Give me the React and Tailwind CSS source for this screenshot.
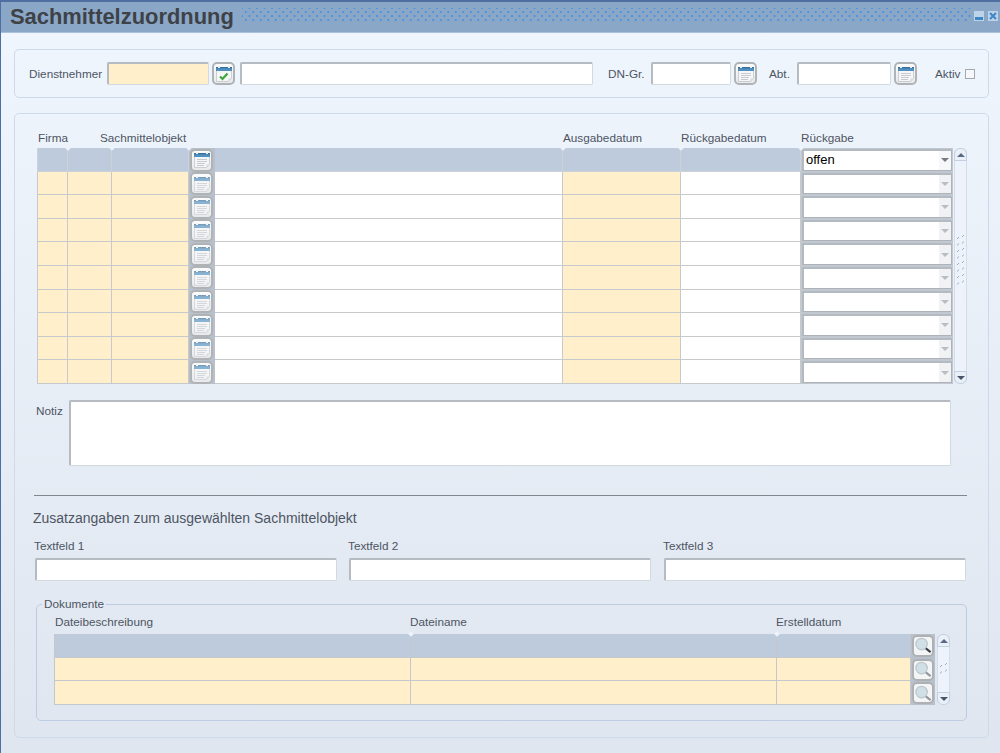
const FONT = "font-['Liberation_Sans',Arial,sans-serif]";

function DocIcon({ check, faded }) {
  return (
    <svg width="18" height="18" viewBox="0 0 18 18" className={faded ? "opacity-60" : "opacity-90"}>
      <path d="M1.5 2.5h15v11l-3 3h-12z" fill="#f6f7f8" stroke="#bcc1c6" strokeWidth="0.8" />
      <rect x="1" y="2" width="16" height="4" fill="#3f86bc" />
      <rect x="1" y="2" width="16" height="1.3" fill="#23618f" />
      <rect x="3" y="1" width="2" height="2" fill="#eef2f6" />
      <rect x="13" y="1" width="2" height="2" fill="#eef2f6" />
      <path d="M13.5 16.5v-3h3z" fill="#d4d7da" />
      {check ? (
        <path d="M5 11.5l2.5 2.5 5-5.5" fill="none" stroke="#2aa02a" strokeWidth="2.2" />
      ) : (
        <path d="M4 8.5h10M4 10.5h10M4 12.5h8M4 14.5h7" stroke="#bcc1c6" strokeWidth="0.9" />
      )}
    </svg>
  );
}

function IconButton({ check, faded }) {
  return (
    <div className="w-[23px] h-[23px] shrink-0 rounded-[5px] border-2 border-[#b0b3b6] bg-gradient-to-b from-[#fcfcfc] to-[#e8e9eb] flex items-center justify-center">
      <DocIcon check={check} faded={faded} />
    </div>
  );
}

function SearchButton({ dark }) {
  return (
    <div className="w-[22px] h-[22px] rounded-[5px] border-2 border-[#aeb1b4] bg-[#f4f5f6] flex items-center justify-center">
      <svg width="19" height="19" viewBox="0 0 19 19">
        <circle cx="8" cy="8" r="6" fill="#cfe0e6" stroke="#bcc6cb" strokeWidth="1.3" />
        <path d="M12.5 12.5l5 4" stroke={dark ? "#3a4046" : "#94989c"} strokeWidth="2.2" />
      </svg>
    </div>
  );
}

function Input({ className = "" }) {
  return (
    <div className={`h-[23px] rounded-[2px] border-t-2 border-l-2 border-r border-b border-t-[#b6bbc2] border-l-[#b6bbc2] border-r-[#d3d9e1] border-b-[#d3d9e1] ${className}`} />
  );
}

function Arrow({ up, color }) {
  return (
    <svg width="8" height="4" viewBox="0 0 8 4">
      <path d={up ? "M4 0L8 4H0z" : "M0 0h8L4 4z"} fill={color} />
    </svg>
  );
}

function Grip({ n }) {
  return (
    <svg width="9" height={n * 6.5} viewBox={`0 0 9 ${n * 6.5}`}>
      {Array.from({ length: n }).map((_, i) => (
        <g key={i} fill="#9fabbb">
          <rect x="1" y={i * 6.5 + 3} width="1" height="1" />
          <rect x="2" y={i * 6.5 + 2} width="1" height="1" />
          <rect x="6" y={i * 6.5 + 1} width="1" height="1" />
          <rect x="7" y={i * 6.5} width="1" height="1" />
        </g>
      ))}
    </svg>
  );
}

function Scrollbar({ className = "", n, gripClass = "" }) {
  return (
    <div className={`w-[13px] rounded-[5px] bg-[#eef3fb] border-x border-[#d3deec] flex flex-col items-center justify-between ${className}`}>
      <div className="w-[13px] h-[13px] shrink-0 rounded-t-[6px] border border-[#c2d0e2] bg-[#eaf0f8] flex items-center justify-center">
        <Arrow up color="#5a6a84" />
      </div>
      <div className={gripClass}><Grip n={n} /></div>
      <div className="w-[13px] h-[13px] shrink-0 rounded-b-[6px] border border-[#c2d0e2] bg-[#eaf0f8] flex items-center justify-center">
        <Arrow color="#4a5468" />
      </div>
    </div>
  );
}

function SelectBox({ value, active }) {
  return (
    <div className="h-full bg-[#c2c8cf] py-[1px] px-[1px] flex-1">
      <div className="h-full rounded-[1px] border-t-2 border-l-2 border-[#b4bac2] bg-white flex items-center border-b border-r border-b-[#aeb3ba] border-r-[#aeb3ba]">
        <span className="flex-1 pl-[2px] pb-[1px] text-[13px] leading-none text-black">{value}</span>
        <div className={`w-[12px] h-full flex items-center justify-center ${active ? "bg-[#f6f7f9]" : "bg-[#f0f2f4]"}`}>
          <Arrow color={active ? "#767b82" : "#b9bdc2"} />
        </div>
      </div>
    </div>
  );
}

function Notch({ className }) {
  return <div className={`absolute top-[-2px] w-[4px] h-[4px] rotate-45 bg-[#eef3fa] ${className}`} />;
}

const cols = "grid-cols-[31px_44px_77px_26px_348px_118px_120px_152px]";

function Row({ active }) {
  const yellow = active ? "bg-[#bdcbdc]" : "bg-[#fff0cb]";
  const plain = active ? "bg-[#bdcbdc]" : "bg-white";
  const line = active ? "border-[#cbd2da]" : "border-[#c6cacd]";
  const cell = `border-r border-b ${line} h-full`;
  return (
    <div className={`grid ${cols} h-[23.6px]`}>
      <div className={`${cell} border-l ${yellow}`} />
      <div className={`${cell} ${yellow}`} />
      <div className={`${cell} ${yellow}`} />
      <div className="bg-[#b8c1cb] h-full flex items-start pl-[1px] pt-[0.5px]">
        <IconButton faded={!active} />
      </div>
      <div className={`${cell} ${plain}`} />
      <div className={`${cell} ${yellow}`} />
      <div className={`${cell} ${plain}`} />
      <div className="h-full flex">
        <SelectBox value={active ? "offen" : ""} active={active} />
      </div>
    </div>
  );
}

function DocRow({ active }) {
  const bg = active ? "bg-[#bdcbdc]" : "bg-[#fff0cb]";
  const cell = `border-r border-b border-[#c4c8cc] h-full ${bg}`;
  return (
    <div className="grid grid-cols-[357px_366px_134px_24px] h-[23.7px]">
      <div className={`${cell} border-l`} />
      <div className={cell} />
      <div className={cell} />
      <div className="bg-[#b8c1cb] h-full flex items-center pl-[1px]">
        <SearchButton dark={active} />
      </div>
    </div>
  );
}

export default function App() {
  return (
    <div className={`w-[1000px] h-[753px] flex flex-col overflow-hidden border-l border-l-[#4e6fa5] bg-gradient-to-b from-[#f0f6fe] to-[#dfe6ef] text-[11.75px] text-[#4d5563] ${FONT}`}>
      {/* Title bar */}
      <div className="h-[33px] shrink-0 border-t-2 border-t-[#4f6fa3] border-b border-b-[#a9c0da] bg-[#8aa7c8] flex items-center pl-[9px] pr-[2px]">
        <span className="text-[21.9px] font-bold leading-none text-[#3e4247] whitespace-nowrap">Sachmittelzuordnung</span>
        <div className="flex-1 h-[14px] ml-[8px] -mt-[4px] bg-[radial-gradient(circle,#4f93dc_1px,transparent_1.3px),radial-gradient(circle,#4f93dc_1px,transparent_1.3px)] bg-[length:7.5px_8px] bg-[position:0_0,3.75px_4px]" />
        <div className="w-[10px] h-[10px] ml-[2px] -mt-[2px] bg-[#bcd3e8] flex items-end justify-center pb-[1px]">
          <div className="w-[8px] h-[3px] bg-[#3d86c8]" />
        </div>
        <div className="w-[10px] h-[10px] ml-[4px] -mt-[2px] bg-[#bcd3e8] flex items-center justify-center">
          <svg width="8" height="8" viewBox="0 0 8 8"><path d="M1 1l6 6M7 1L1 7" stroke="#3d86c8" strokeWidth="2" /></svg>
        </div>
      </div>

      <div className="flex-1 pl-[13px] pr-[11px] pt-[16px]">
        {/* Top panel */}
        <div className="h-[49px] rounded-[5px] border border-[#cddaea] flex items-center pl-[14px]">
          <span className="w-[78px] shrink-0">Dienstnehmer</span>
          <Input className="w-[102px] bg-[#fff0cb]" />
          <div className="ml-[3px]"><IconButton check /></div>
          <Input className="w-[353px] ml-[5px] bg-white" />
          <span className="ml-[15px] w-[43px] shrink-0">DN-Gr.</span>
          <Input className="w-[80px] bg-white" />
          <div className="ml-[3px]"><IconButton /></div>
          <span className="ml-[12px] w-[28px] shrink-0">Abt.</span>
          <Input className="w-[94px] bg-white" />
          <div className="ml-[3px]"><IconButton /></div>
          <span className="ml-[18px]">Aktiv</span>
          <div className="w-[10px] h-[10px] ml-[5px] border border-[#a4a8ad] bg-[#f5f7fa]" />
        </div>

        {/* Main panel */}
        <div className="mt-[15px] h-[625px] rounded-[5px] border border-[#cddaea] pt-[15px] pl-[22px] pr-[20px]">
          <div className={`grid ${cols} h-[19px]`}>
            <span className="pl-[1px]">Firma</span>
            <span className="col-span-3 pl-[32px]">Sachmittelobjekt</span>
            <span />
            <span>Ausgabedatum</span>
            <span>Rückgabedatum</span>
            <span>Rückgabe</span>
          </div>
          <div className="flex">
            <div className="w-[916px] relative">
              <Notch className="left-[29px]" />
              <Notch className="left-[73px]" />
              <Notch className="left-[150px]" />
              <Notch className="left-[524px]" />
              <Notch className="left-[642px]" />
              <Notch className="left-[762px]" />
              <Row active />
              {Array.from({ length: 9 }).map((_, i) => <Row key={i} />)}
            </div>
            <Scrollbar className="ml-[1px] h-[236px]" n={8} gripClass="mb-[10px]" />
          </div>

          {/* Notiz */}
          <div className="flex mt-[16px] -ml-[1px]">
            <span className="w-[33px] shrink-0 pt-[2px]">Notiz</span>
            <Input className="w-[882px] !h-[66px] bg-white" />
          </div>

          <div className="mt-[29px] -ml-[3px] h-px bg-[#808890] w-[933px]" />
          <div className="mt-[14px] -ml-[4px] text-[14px] leading-[16px]">Zusatzangaben zum ausgewählten Sachmittelobjekt</div>

          <div className="mt-[13px] -ml-[2px] grid grid-cols-[302px_302px_303px] gap-x-[12px]">
            <div>
              <div className="h-[19px] leading-[14px] -ml-[1px]">Textfeld 1</div>
              <Input className="bg-white" />
            </div>
            <div>
              <div className="h-[19px] leading-[14px] -ml-[1px]">Textfeld 2</div>
              <Input className="bg-white" />
            </div>
            <div className="ml-[1px]">
              <div className="h-[19px] leading-[14px] -ml-[1px]">Textfeld 3</div>
              <Input className="bg-white" />
            </div>
          </div>

          {/* Dokumente */}
          <fieldset className="mt-[17px] -ml-[1px] w-[931px] h-[123px] rounded-[5px] border border-[#bccde3] pl-[17px] pr-[16px]">
            <legend className="ml-[-12px] px-[2px] leading-[12px]">Dokumente</legend>
            <div className="grid grid-cols-[356px_366px_135px] h-[19px] pt-[5px] leading-[14px]">
              <span className="pl-[1px]">Dateibeschreibung</span>
              <span>Dateiname</span>
              <span>Erstelldatum</span>
            </div>
            <div className="flex">
              <div className="w-[881px] pt-[5px] relative">
                <Notch className="left-[355px] top-[3px]" />
                <Notch className="left-[721px] top-[3px]" />
                <DocRow active />
                <DocRow />
                <DocRow />
              </div>
              <div className="pt-[5px] ml-[2px]">
                <Scrollbar className="h-[71px]" n={2} />
              </div>
            </div>
          </fieldset>
        </div>
      </div>
    </div>
  );
}
